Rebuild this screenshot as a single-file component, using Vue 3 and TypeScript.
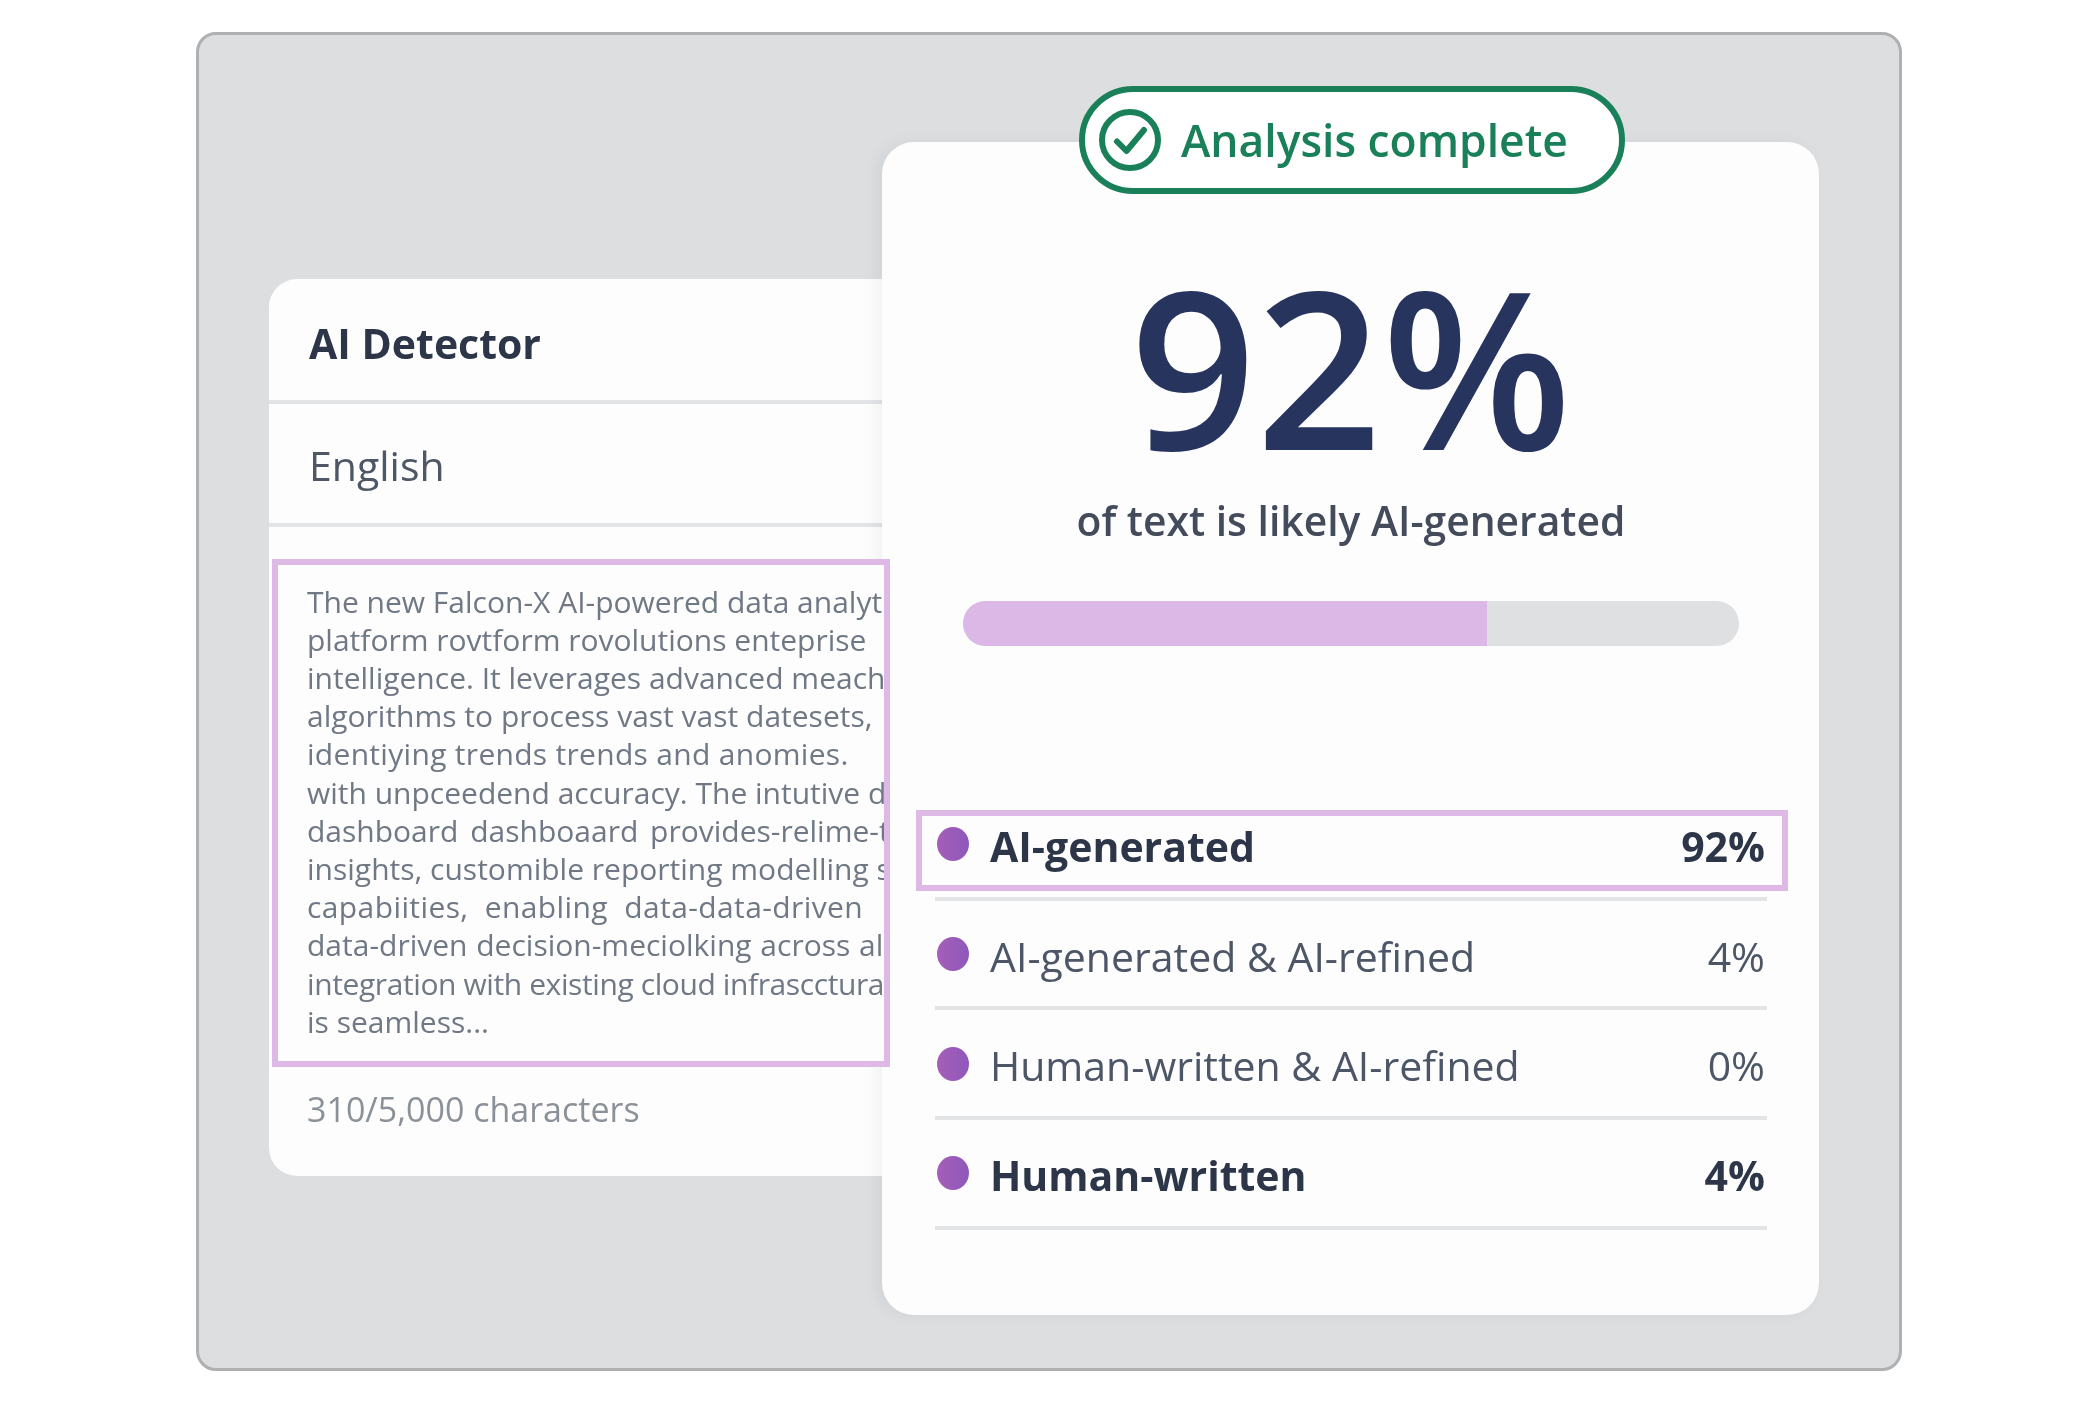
<script setup lang="ts">
interface Row {
  label: string
  value: string
  strong?: boolean
  marked?: boolean
}

interface Line {
  text: string
  letters?: number
  words?: number
}

const lines: Line[] = [
  { text: 'The new Falcon-X AI-powered data analytics' },
  { text: 'platform rovtform rovolutions enteprise' },
  { text: 'intelligence. It leverages advanced meachine' },
  { text: 'algorithms to process vast vast datesets,' },
  { text: 'identiying trends trends and anomies.', letters: 0.3 },
  { text: 'with unpceedend accuracy. The intutive data' },
  { text: 'dashboard dashboaard provides-relime-time', words: 4 },
  { text: 'insights, customible reporting modelling suite' },
  { text: 'capabiities, enabling data-data-driven', letters: 0.4, words: 8 },
  { text: 'data-driven decision-meciolking across all', words: 1 },
  { text: 'integration with existing cloud infrascctura', letters: -0.4 },
  { text: 'is seamless...' },
]

const rows: Row[] = [
  { label: 'AI-generated', value: '92%', strong: true, marked: true },
  { label: 'AI-generated & AI-refined', value: '4%' },
  { label: 'Human-written & AI-refined', value: '0%' },
  { label: 'Human-written', value: '4%', strong: true },
]

const score = 67.5
</script>

<template>
  <main class="frame">
    <section class="input-card">
      <h2 class="input-title">AI Detector</h2>
      <div class="input-lang">English</div>
      <div class="input-text">
        <div
          v-for="line in lines"
          :key="line.text"
          class="input-line"
          :style="{ letterSpacing: (line.letters ?? 0) + 'px', wordSpacing: (line.words ?? 0) + 'px' }"
        >{{ line.text }}</div>
      </div>
      <div class="input-count">310/5,000 characters</div>
    </section>

    <section class="result-card">
      <div class="status-pill">
        <svg class="status-icon" viewBox="0 0 62 62" fill="none" aria-hidden="true">
          <circle cx="31" cy="31" r="28" stroke="#1a8059" stroke-width="6" />
          <path d="M18 32.5 27.5 42 45 21" stroke="#1a8059" stroke-width="6" stroke-linecap="round" stroke-linejoin="round" />
        </svg>
        <span>Analysis complete</span>
      </div>

      <div class="score">92%</div>
      <div class="score-caption">of text is likely AI-generated</div>
      <div class="bar">
        <div class="bar-fill" :style="{ width: score + '%' }"></div>
      </div>

      <ul class="rows">
        <li v-for="row in rows" :key="row.label" :class="['row', { strong: row.strong, marked: row.marked }]">
          <span class="row-dot"></span>
          <span class="row-label">{{ row.label }}</span>
          <span class="row-value">{{ row.value }}</span>
        </li>
      </ul>
    </section>
  </main>
</template>

<style>
html, body { background: #fff; }
</style>

<style scoped>
.frame {
  box-sizing: border-box;
  width: 1706px;
  height: 1339px;
  margin: 32px 0 0 196px;
  padding: 107px 80px 53px 70px;
  display: flex;
  align-items: center;
  background: #dcdee0;
  border: 3px solid #aeb0b2;
  border-radius: 20px;
  font-family: "Open Sans", "Noto Sans", sans-serif;
  filter: blur(0.5px);
}
.input-card {
  flex: none;
  box-sizing: border-box;
  width: 613px;
  height: 897px;
  margin-bottom: 3px;
  background: #fdfdfd;
  border-radius: 28px 0 0 28px;
}
.input-title {
  box-sizing: border-box;
  height: 125px;
  margin: 0;
  padding: 7px 0 0 40px;
  display: flex;
  align-items: center;
  font-size: 41px;
  font-weight: 700;
  color: #2d3648;
  border-bottom: 4px solid #e2e4e6;
}
.input-lang {
  box-sizing: border-box;
  height: 123px;
  padding: 4px 0 0 40px;
  display: flex;
  align-items: center;
  font-size: 41px;
  color: #4d5765;
  border-bottom: 4px solid #e2e4e6;
}
.input-text {
  position: relative;
  z-index: 2;
  box-sizing: border-box;
  width: 618px;
  height: 508px;
  margin: 32px 0 0 3px;
  padding: 18px 0 0 29px;
  border: 6px solid #dfb9e6;
  overflow: hidden;
  background: #fdfdfd;
}
.input-line {
  font-size: 30px;
  line-height: 38.2px;
  white-space: nowrap;
  color: #6f7884;
}
.input-count {
  margin-top: 20px;
  padding-left: 38px;
  font-size: 34px;
  line-height: 44px;
  color: #8b9199;
}
.result-card {
  position: relative;
  z-index: 1;
  flex: none;
  box-sizing: border-box;
  width: 937px;
  height: 1173px;
  padding: 103px 52px 0 53px;
  background: #fdfdfd;
  border-radius: 32px;
  box-shadow: -6px 0 14px rgba(90, 95, 105, 0.07);
  display: flex;
  flex-direction: column;
  align-items: stretch;
}
.status-pill {
  position: absolute;
  top: -56px;
  left: 197px;
  box-sizing: border-box;
  width: 546px;
  height: 108px;
  padding-left: 14px;
  display: flex;
  align-items: center;
  gap: 20px;
  background: #fff;
  border: 6px solid #1a8059;
  border-radius: 54px;
  font-size: 44.4px;
  font-weight: 600;
  color: #1a8059;
}
.status-icon {
  width: 62px;
  height: 62px;
  flex: none;
}
.score {
  text-align: center;
  font-size: 220px;
  font-weight: 600;
  line-height: 240px;
  color: #26345e;
}
.score-caption {
  margin-top: 6px;
  text-align: center;
  font-size: 40.8px;
  font-weight: 600;
  line-height: 58px;
  color: #444b5a;
}
.bar {
  height: 45px;
  margin: 52px 28px 0 28px;
  border-radius: 23px;
  background: #dfe0e2;
  overflow: hidden;
}
.bar-fill {
  height: 100%;
  background: #dcb8e6;
}
.rows {
  list-style: none;
  margin: 145px 0 0;
  padding: 0;
}
.row {
  position: relative;
  box-sizing: border-box;
  height: 109.7px;
  display: flex;
  align-items: center;
  padding: 4px 2px 0 2px;
  border-bottom: 4px solid #e2e4e6;
  font-size: 41px;
  color: #4d5667;
}
.row.strong {
  font-weight: 700;
  color: #2d3648;
}
.row.marked::after {
  content: "";
  position: absolute;
  top: 19px;
  left: -19px;
  right: -21px;
  bottom: 6px;
  border: 6px solid #dfb9e6;
}
.row-dot {
  flex: none;
  width: 32px;
  height: 34px;
  margin: -3px 21px 0 0;
  border-radius: 50%;
  background: linear-gradient(90deg, #a65eb9, #8d58ba);
}
.row-label {
  flex: 1;
}
</style>
